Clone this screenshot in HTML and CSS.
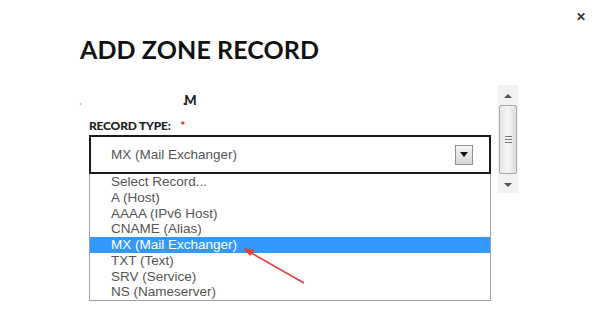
FILE: index.html
```html
<!DOCTYPE html>
<html>
<head>
  <title>Add Zone Record</title>
  <link rel="stylesheet" href="styles.css">
</head>
<body>
  <div class="modal">
    <button class="close" aria-label="Close">&#x2715;</button>
    <h1 class="heading">ADD ZONE RECORD</h1>
    <div class="body">
      <div class="fields">
        <div class="domain"><span class="dot">.</span><span class="tail">.M</span></div>
        <label class="label">RECORD TYPE: <span class="req">*</span></label>
        <div class="select">
          <span class="value">MX (Mail Exchanger)</span>
          <span class="drop-btn"><span class="tri"></span></span>
        </div>
        <ul class="options">
          <li>Select Record...</li>
          <li>A (Host)</li>
          <li>AAAA (IPv6 Host)</li>
          <li>CNAME (Alias)</li>
          <li class="selected">MX (Mail Exchanger)</li>
          <li>TXT (Text)</li>
          <li>SRV (Service)</li>
          <li>NS (Nameserver)</li>
        </ul>
      </div>
      <div class="scrollbar">
        <span class="arrow up"></span>
        <div class="thumb"><span class="grip"></span></div>
        <span class="arrow down"></span>
      </div>
    </div>
    <!-- annotation arrow drawn over the list -->
    <svg class="pointer" width="80" height="50" viewBox="0 0 80 50">
      <line x1="65" y1="39" x2="7" y2="6" stroke="#e0413b" stroke-width="1.6"/>
      <polygon points="4,4 16,6 11,12" fill="#e0413b"/>
    </svg>
  </div>
</body>
</html>
```

FILE: styles.css
```css
body {
  margin: 0;
  background: #fff;
  font-family: Arial, "Liberation Sans", sans-serif;
}
.modal {
  position: relative;
  width: 600px;
  height: 320px;
  padding: 35px 0 0 80px;
  box-sizing: border-box;
}
.close {
  position: absolute;
  top: 10px;
  right: 14px;
  border: none;
  background: none;
  padding: 0;
  font-size: 12px;
  font-weight: bold;
  color: #333;
  cursor: pointer;
}
.heading {
  margin: 0;
  font-family: Lato, sans-serif;
  font-weight: 700;
  font-size: 25px;
  line-height: 28px;
  color: #111;
  letter-spacing: 0.1px;
}
.body {
  display: flex;
  margin: 29px 0 0 9px;
}
.fields {
  width: 402px;
}
.domain {
  height: 16px;
  font-family: Lato, sans-serif;
  font-weight: 900;
  font-size: 13px;
  color: #222;
}
.dot {
  color: #bbb;
  margin-left: -10px;
}
.tail {
  margin-left: 101px;
  letter-spacing: -2px;
}
.label {
  display: block;
  margin-top: 11px;
  font-family: Lato, sans-serif;
  font-weight: 900;
  font-size: 12px;
  line-height: 14px;
  color: #222;
  letter-spacing: -0.2px;
}
.req {
  color: #d9261c;
  margin-left: 7px;
}
.select {
  display: flex;
  align-items: center;
  justify-content: space-between;
  height: 35px;
  margin-top: 2px;
  border: 2px solid #1c1c1c;
  padding: 0 16px 0 20px;
}
.value {
  font-size: 13.5px;
  color: #555;
}
.drop-btn {
  width: 16px;
  height: 18px;
  border: 1px solid #8f8f8f;
  background: linear-gradient(#f4f4f4, #d6d6d6);
  display: flex;
  align-items: center;
  justify-content: center;
}
.tri {
  width: 0;
  height: 0;
  border-left: 4px solid transparent;
  border-right: 4px solid transparent;
  border-top: 5px solid #111;
}
.options {
  list-style: none;
  margin: 0;
  padding: 0;
  border: 1px solid #9aa3ad;
  border-top: none;
}
.options li {
  height: 15.75px;
  line-height: 15.75px;
  padding-left: 21px;
  font-size: 13.5px;
  color: #555;
}
.options li.selected {
  background: #3399ff;
  color: #fff;
}
.scrollbar {
  width: 20px;
  height: 108px;
  margin: -7px 0 0 7px;
  background: #f2f2f2;
  display: flex;
  flex-direction: column;
  align-items: center;
}
.arrow {
  width: 0;
  height: 0;
  border-left: 4px solid transparent;
  border-right: 4px solid transparent;
}
.arrow.up {
  margin-top: 9px;
  border-bottom: 4px solid #555;
}
.arrow.down {
  margin-top: 9px;
  border-top: 4px solid #555;
}
.thumb {
  margin-top: 7px;
  width: 16px;
  height: 67px;
  border: 1px solid #a9a9a9;
  border-radius: 2px;
  background: linear-gradient(90deg, #e6e6e6, #f7f7f7 50%, #dcdcdc);
  display: flex;
  align-items: center;
  justify-content: center;
}
.grip {
  width: 7px;
  height: 7px;
  background: repeating-linear-gradient(#777 0 1px, transparent 1px 3px);
}
.pointer {
  position: absolute;
  left: 239px;
  top: 244px;
}
```
